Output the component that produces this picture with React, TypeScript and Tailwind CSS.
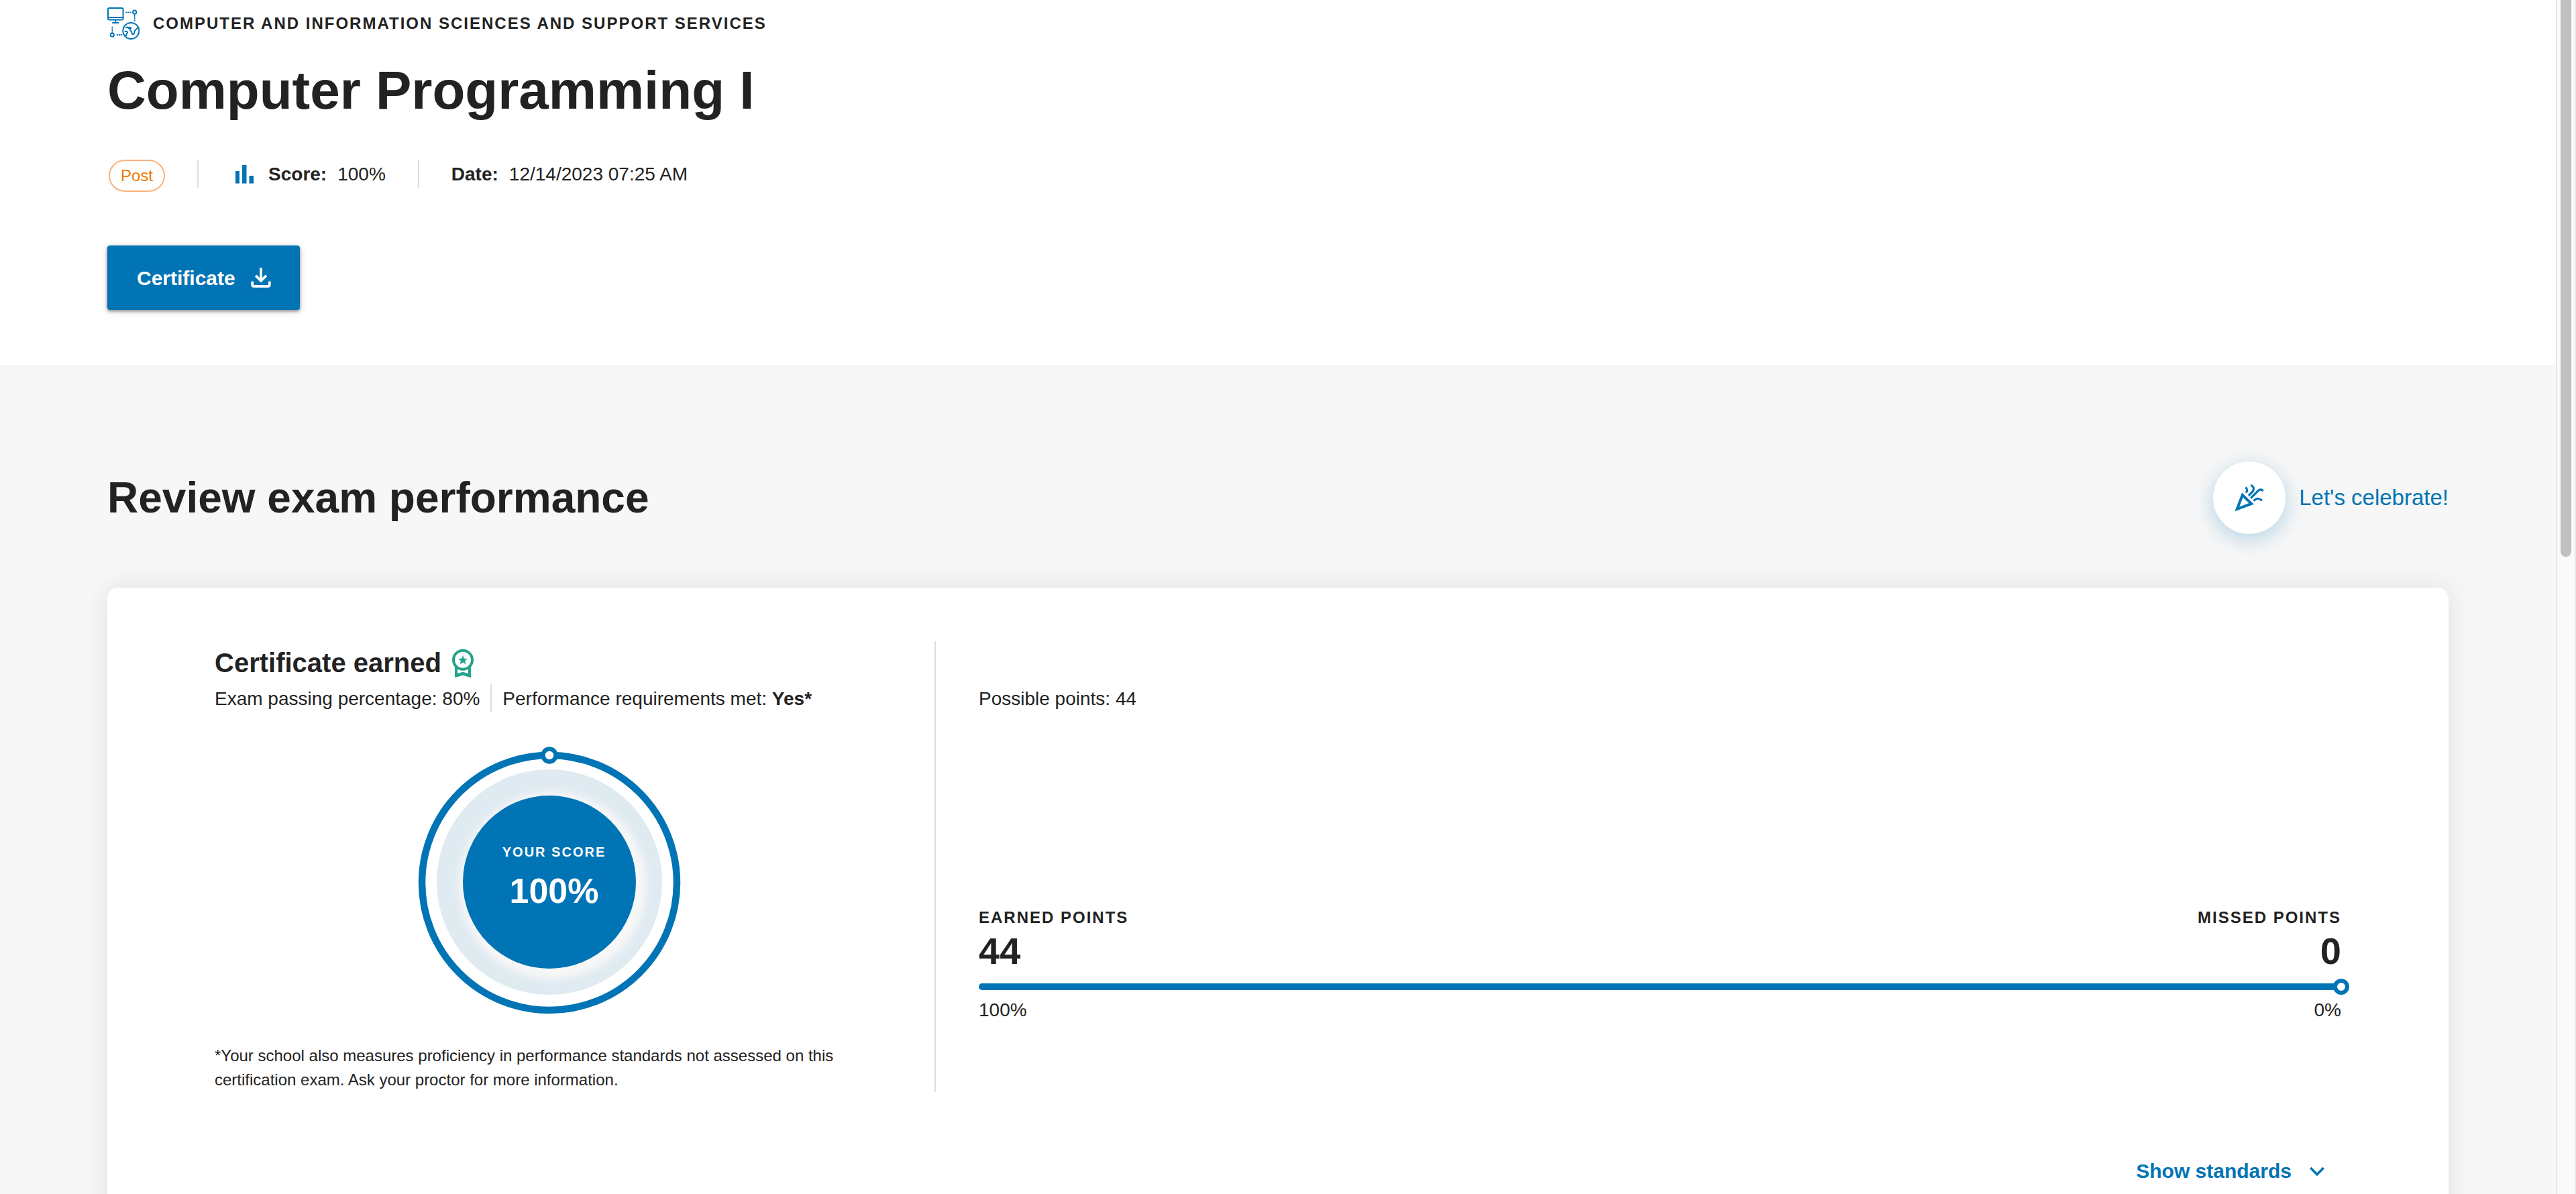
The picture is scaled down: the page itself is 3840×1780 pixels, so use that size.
const BLUE = "#0074b4";

function SubjectIcon() {
  return (
    <svg className="size-12 shrink-0" viewBox="0 0 48 48" fill="none" stroke={BLUE} strokeWidth="2" strokeLinecap="round" strokeLinejoin="round" aria-hidden="true">
      <rect x="1" y="1" width="22.5" height="17.5" rx="2" />
      <path d="M1 15h22.5M12.2 18.5V23M8 23h8.5" />
      <path d="M28 7.3h7M40.7 12v8" strokeWidth="1.8" strokeDasharray="1 2.4" />
      <circle cx="40.7" cy="7.2" r="2.6" />
      <path d="M7.3 29.5v8M14.5 41h7" strokeWidth="1.8" strokeDasharray="1 2.4" />
      <circle cx="7.3" cy="41" r="2.6" />
      <circle cx="35.3" cy="35" r="12" />
      <path d="M28 30.2c1.2-1 2.4-.4 3.2.4 1-.9 2.4-1.2 3.4-.2.8 1 .2 2-.8 2.2M31.5 30.6c.6 1 1.8 1.4 2.4.6" />
      <path d="M26.5 36c1.4-.6 2.8-.3 3.6.8.2 1.400-1.200 2-1.600 3.400l-.600 2" />
      <path d="M34 34.500c1.400.200 1.800 1.200 2 2.200 0 1.400.800 2.400 1.600 3.400 1.400.200 2.200-1 2.600-2.400.200-1.600.400-3 1.600-4 1-.800 2.200-2 3-2.800" />
    </svg>
  );
}

function BarsIcon() {
  return (
    <svg className="size-10 shrink-0" viewBox="0 0 40 40" fill={BLUE} aria-hidden="true">
      <path d="M7 15h6v18.5H7zM17 6h6.5v27.5H17zM27.500 22H34v11.500h-6.500z" />
    </svg>
  );
}

function DownloadIcon() {
  return (
    <svg className="size-11 shrink-0" viewBox="0 0 24 24" fill="currentColor" aria-hidden="true">
      <path d="M18 15v3H6v-3H4v3c0 1.1.9 2 2 2h12c1.1 0 2-.9 2-2v-3h-2zm-1-4-1.41-1.41L13 12.17V4h-2v8.17L8.41 9.59 7 11l5 5 5-5z" />
    </svg>
  );
}

function PartyIcon() {
  return (
    <svg className="h-10 w-[42px] overflow-visible" viewBox="0 0 42 40" fill="none" stroke={BLUE} strokeWidth="3.2" aria-hidden="true">
      <path d="M10.8 16 24.2 29 2.8 36.800Z" strokeWidth="4" />
      <path d="M15.400 4.600c3 2.200 3 4.800.600 8" />
      <path d="M23.600 1c5 3.800 5 7.600 1 11.400l-4.600 4.600" />
      <path d="M23.200 20.600 34.600 9.200c2.200-2.200 5-1.600 7 .800" />
      <path d="M27.600 24.600c4-4.400 8.200-4.400 12.400-.2" />
    </svg>
  );
}

function BadgeIcon() {
  return (
    <svg className="size-12 shrink-0" viewBox="0 0 48 48" fill="#24a38a" aria-hidden="true">
      <circle cx="24" cy="19.800" r="14" fill="none" stroke="#24a38a" strokeWidth="4" />
      <path d="m24 12.800 1.800 5 5.400.200-4.200 3.300 1.500 5.200-4.500-3-4.500 3 1.500-5.200-4.200-3.300 5.400-.200z" />
      <path d="M12 29v17.200l12-3.400 12 3.400V29l-4 3.600v7.400L24 37.800 16 40v-7.400z" />
    </svg>
  );
}

function ChevronIcon() {
  return (
    <svg className="size-11 shrink-0" viewBox="0 0 24 24" fill="currentColor" aria-hidden="true">
      <path d="M16.590 8.590 12 13.170 7.410 8.590 6 10l6 6 6-6z" />
    </svg>
  );
}

function VerticalRule() {
  return <span className="h-[42px] w-0.5 bg-[#dedede]" />;
}

function ScoreDial() {
  return (
    <div className="relative mx-auto mt-12 size-[400px]">
      <svg className="size-full" viewBox="0 0 400 400" aria-hidden="true">
        <defs>
          <filter id="glow" x="-20%" y="-20%" width="140%" height="140%">
            <feGaussianBlur stdDeviation="6" />
          </filter>
        </defs>
        <circle cx="200" cy="204" r="190" fill="none" stroke={BLUE} strokeWidth="10.500" />
        <circle cx="200" cy="203" r="168" fill="#dfeaf1" />
        <circle cx="205" cy="208" r="140" fill="#f7f7f7" filter="url(#glow)" />
        <circle cx="200" cy="203" r="129" fill={BLUE} />
        <circle cx="200" cy="14" r="9.500" fill="#fff" stroke={BLUE} strokeWidth="6.500" />
      </svg>
      <div className="absolute inset-0 flex flex-col items-center pt-[140px] pl-3.5 font-bold text-white">
        <span className="text-[20px] leading-9 tracking-[2px]">YOUR SCORE</span>
        <span className="mt-1 text-[52px] leading-[72px]">100%</span>
      </div>
    </div>
  );
}

function PointsBar({ earned, possible }: { earned: number; possible: number }) {
  const percent = Math.round((earned / possible) * 100);
  return (
    <div className="mt-[286px]">
      <div className="flex justify-between font-bold">
        <div>
          <p className="text-2xl leading-9 tracking-[2px]">EARNED POINTS</p>
          <p className="text-[56px] leading-[64px]">{earned}</p>
        </div>
        <div className="text-right">
          <p className="text-2xl leading-9 tracking-[2px]">MISSED POINTS</p>
          <p className="text-[56px] leading-[64px]">{possible - earned}</p>
        </div>
      </div>
      <div className="relative mt-4 h-2.5 rounded-full bg-[#dfeaf1]">
        <div className="h-full rounded-full bg-[#0074b4]" style={{ width: `${percent}%` }} />
        <span
          className="absolute top-1/2 size-6 -translate-x-1/2 -translate-y-1/2 rounded-full border-[6px] border-[#0074b4] bg-white"
          style={{ left: `${percent}%` }}
        />
      </div>
      <div className="mt-2 flex justify-between text-[28px] leading-[44px]">
        <span>{percent}%</span>
        <span>{100 - percent}%</span>
      </div>
    </div>
  );
}

export default function App() {
  return (
    <div className="flex h-screen overflow-hidden bg-[#f7f7f7] font-['Liberation_Sans',Arial,sans-serif] text-[#222222]">
      <main className="min-w-0 flex-1">
        <header className="bg-white px-40 pt-[11px] pb-[82px]">
          <div className="flex items-center gap-5">
            <SubjectIcon />
            <p className="text-2xl leading-9 font-bold tracking-[2px]">COMPUTER AND INFORMATION SCIENCES AND SUPPORT SERVICES</p>
          </div>
          <h1 className="mt-7 text-[80px] leading-[96px] font-bold">Computer Programming I</h1>
          <div className="mt-[55px] flex items-start gap-12 text-[28px] leading-[44px]">
            <span className="ml-0.5 rounded-full border-2 border-[#f9b27c] px-4 text-2xl leading-[44px] text-[#f07800]">Post</span>
            <VerticalRule />
            <div className="flex items-center gap-4">
              <BarsIcon />
              <strong>Score:</strong>
              <span>100%</span>
            </div>
            <VerticalRule />
            <div className="flex gap-4">
              <strong>Date:</strong>
              <span>12/14/2023 07:25 AM</span>
            </div>
          </div>
          <button
            type="button"
            className="mt-20 flex h-24 items-center gap-4 rounded bg-[#0074b4] pr-9 pl-11 text-[30px] font-bold text-white shadow-[0_2px_4px_rgba(0,0,0,0.4),0_2px_12px_rgba(0,0,0,0.16)]"
          >
            Certificate
            <DownloadIcon />
          </button>
        </header>

        <section className="px-40 pt-36">
          <div className="flex items-center justify-between">
            <h2 className="text-[64px] leading-[80px] font-bold">Review exam performance</h2>
            <button type="button" className="flex items-center gap-5 text-[33px] text-[#0074b4]">
              <span className="flex size-[108px] items-center justify-center rounded-full bg-white shadow-[0_8px_32px_rgba(0,116,180,0.28)]">
                <PartyIcon />
              </span>
              Let's celebrate!
            </button>
          </div>

          <div className="mt-20 rounded-2xl bg-white px-40 pt-20 pb-40 shadow-[0_0_40px_rgba(0,0,0,0.1)]">
            <div className="grid grid-cols-[1073fr_2097fr]">
              <div className="pt-2 pr-[75px]">
                <h3 className="flex items-center gap-2 text-[40px] leading-[48px] font-bold">
                  Certificate earned
                  <BadgeIcon />
                </h3>
                <div className="mt-2 flex gap-4 text-[28px] leading-[44px]">
                  <span>Exam passing percentage: 80%</span>
                  <VerticalRule />
                  <span>
                    Performance requirements met: <strong>Yes*</strong>
                  </span>
                </div>
                <ScoreDial />
                <p className="mt-11 text-2xl leading-9">
                  *Your school also measures proficiency in performance standards not assessed on this certification exam. Ask your proctor for more information.
                </p>
              </div>
              <div className="border-l-2 border-[#dedede] pt-16 pl-16">
                <p className="text-[28px] leading-[44px]">Possible points: 44</p>
                <PointsBar earned={44} possible={44} />
              </div>
            </div>
            <div className="mt-24 flex justify-end">
              <button type="button" className="flex items-center gap-4 pr-3.5 text-[30px] leading-[44px] font-bold text-[#0074b4]">
                Show standards
                <ChevronIcon />
              </button>
            </div>
          </div>
        </section>
      </main>
      <div className="w-[30px] shrink-0 border-r-2 border-l-2 border-[#e8e8e8] bg-[#fafafa] px-[5px]" aria-hidden="true">
        <div className="h-[830px] rounded-b-full bg-[#c1c1c1]" />
      </div>
    </div>
  );
}
